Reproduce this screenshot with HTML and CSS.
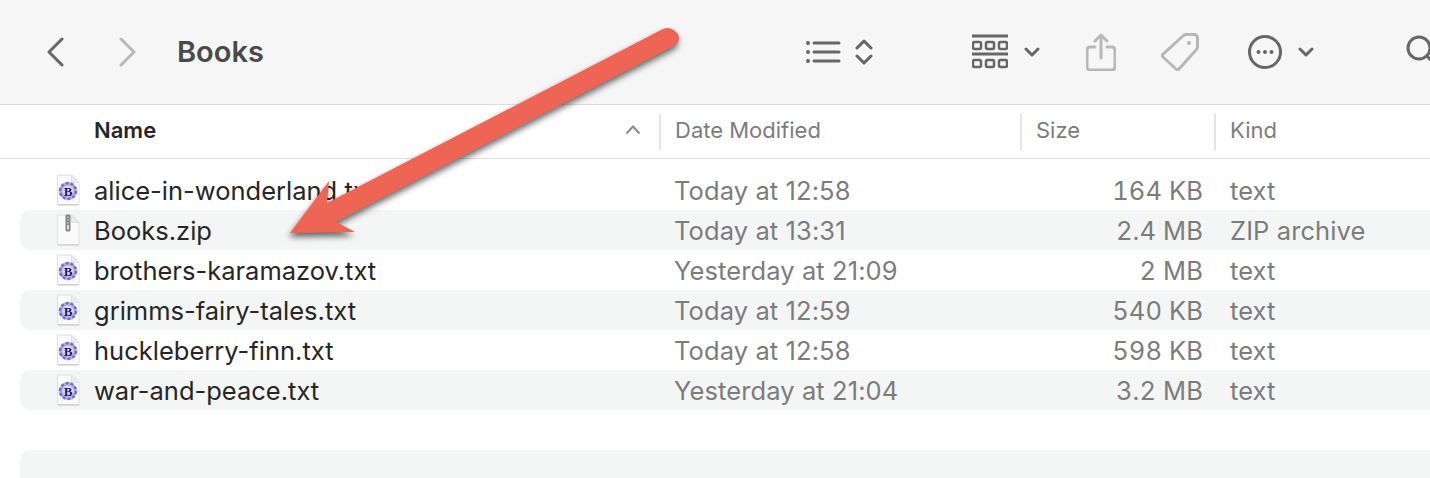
FILE: index.html
```html
<!DOCTYPE html>
<html lang="en">
<head>
  <meta charset="UTF-8">
  <meta name="viewport" content="width=device-width, initial-scale=1.0">
  <title>Books</title>
  <link rel="stylesheet" href="styles.css">
</head>
<body>
  <svg class="sprite" aria-hidden="true">
    <symbol id="doc-icon" viewBox="0 0 24 32">
      <path d="M1.500 1h14l7.500 7.500V30.500H1.500z" fill="#fbfbfb" stroke="#dedede"/>
      <path d="M2 31h21" stroke="#c4c4c4"/>
      <path d="M15.500 1v7.500H23z" fill="#ececec" stroke="#dedede"/>
      <circle cx="12" cy="17" r="9" fill="#aeacdf"/>
      <circle cx="12" cy="17" r="8" fill="none" stroke="#7472c0" stroke-width="2.500" stroke-dasharray="3 2"/>
      <circle cx="12" cy="17" r="5.500" fill="#dcdcf4"/>
      <text class="doc-letter" x="12" y="21.500" text-anchor="middle">B</text>
    </symbol>
    <symbol id="zip-icon" viewBox="0 0 24 32">
      <path d="M1.500 1h14l7.500 7.500V30.500H1.500z" fill="#fafafa" stroke="#e0e0e0"/>
      <path d="M2 31h21" stroke="#c8c8c8"/>
      <path d="M15.500 1v7.500H23z" fill="#ececec" stroke="#e0e0e0"/>
      <rect x="9.500" y="0.500" width="5" height="17" rx="1.500" fill="#858585"/>
      <path d="M11 3h2M11 6h2M11 9h2" stroke="#cfcfcf"/>
      <rect x="11" y="11" width="2" height="4.500" fill="#dcdcdc"/>
    </symbol>
  </svg>

  <div class="window">
    <div class="toolbar">
      <svg class="tool nav-back" width="18" height="30" viewBox="0 0 18 30"><path d="M16 2 3 15l13 13"/></svg>
      <svg class="tool tool-faint nav-forward" width="18" height="30" viewBox="0 0 18 30"><path d="m2 2 13 13L2 28"/></svg>
      <h1 class="folder-name">Books</h1>

      <svg class="tool view-list" width="36" height="26" viewBox="0 0 36 26">
        <path d="M9 4h25M9 13h25M9 22h25"/>
        <circle class="tool-fill" cx="3" cy="4" r="2"/>
        <circle class="tool-fill" cx="3" cy="13" r="2"/>
        <circle class="tool-fill" cx="3" cy="22" r="2"/>
      </svg>
      <svg class="tool view-updown" width="18" height="28" viewBox="0 0 18 28"><path d="m2 10 7-7 7 7M2 18l7 7 7-7"/></svg>

      <svg class="tool view-grid" width="36" height="36" viewBox="0 0 36 36">
        <path d="M0 2h36M0 20h36"/>
        <g class="tool-thin">
          <rect x="1" y="8" width="8" height="7" rx="1.500"/>
          <rect x="14" y="8" width="8" height="7" rx="1.500"/>
          <rect x="27" y="8" width="8" height="7" rx="1.500"/>
          <rect x="1" y="26" width="8" height="7" rx="1.500"/>
          <rect x="14" y="26" width="8" height="7" rx="1.500"/>
          <rect x="27" y="26" width="8" height="7" rx="1.500"/>
        </g>
      </svg>
      <svg class="tool caret-grid" width="16" height="12" viewBox="0 0 16 12"><path d="m2 3 6 6 6-6"/></svg>

      <svg class="tool tool-faint share" width="30" height="38" viewBox="0 0 30 38">
        <path d="M9 14H4a3 3 0 0 0-3 3v17a3 3 0 0 0 3 3h22a3 3 0 0 0 3-3V17a3 3 0 0 0-3-3h-5"/>
        <path d="M15 25V2M9 8l6-6 6 6"/>
      </svg>
      <svg class="tool tool-faint tag" width="38" height="38" viewBox="0 0 38 38">
        <path d="M25 1.500h8a3.500 3.500 0 0 1 3.500 3.500v9a4 4 0 0 1-1 2.500L18 36a2 2 0 0 1-3 0L2 24a2 2 0 0 1 0-3L22 3a4 4 0 0 1 3-1.500z"/>
        <circle class="tool-faint-fill" cx="28" cy="10" r="2"/>
      </svg>

      <svg class="tool more" width="34" height="34" viewBox="0 0 34 34">
        <circle cx="17" cy="17" r="15.500"/>
        <circle class="tool-fill" cx="10.500" cy="17" r="2"/>
        <circle class="tool-fill" cx="17" cy="17" r="2"/>
        <circle class="tool-fill" cx="23.500" cy="17" r="2"/>
      </svg>
      <svg class="tool caret-more" width="16" height="12" viewBox="0 0 16 12"><path d="m2 3 6 6 6-6"/></svg>

      <svg class="tool search" width="32" height="34" viewBox="0 0 32 34">
        <circle cx="13" cy="13" r="11"/>
        <path d="m21 21 9 10"/>
      </svg>
    </div>

    <div class="columns">
      <div class="column column-name">
        <span>Name</span>
        <svg class="sort-caret" width="16" height="11" viewBox="0 0 16 11"><path d="m1.500 9.500 6.500-7 6.500 7"/></svg>
      </div>
      <div class="column">Date Modified</div>
      <div class="column">Size</div>
      <div class="column">Kind</div>
    </div>

    <div class="file-list">
      <div class="file-row">
        <div class="file-name"><svg class="file-icon"><use href="#doc-icon"/></svg>alice-in-wonderland.txt</div>
        <div class="file-meta">Today at 12:58</div>
        <div class="file-meta file-size">164 KB</div>
        <div class="file-meta">text</div>
      </div>
      <div class="file-row">
        <div class="file-name"><svg class="file-icon"><use href="#zip-icon"/></svg>Books.zip</div>
        <div class="file-meta">Today at 13:31</div>
        <div class="file-meta file-size">2.4 MB</div>
        <div class="file-meta">ZIP archive</div>
      </div>
      <div class="file-row">
        <div class="file-name"><svg class="file-icon"><use href="#doc-icon"/></svg>brothers-karamazov.txt</div>
        <div class="file-meta">Yesterday at 21:09</div>
        <div class="file-meta file-size">2 MB</div>
        <div class="file-meta">text</div>
      </div>
      <div class="file-row">
        <div class="file-name"><svg class="file-icon"><use href="#doc-icon"/></svg>grimms-fairy-tales.txt</div>
        <div class="file-meta">Today at 12:59</div>
        <div class="file-meta file-size">540 KB</div>
        <div class="file-meta">text</div>
      </div>
      <div class="file-row">
        <div class="file-name"><svg class="file-icon"><use href="#doc-icon"/></svg>huckleberry-finn.txt</div>
        <div class="file-meta">Today at 12:58</div>
        <div class="file-meta file-size">598 KB</div>
        <div class="file-meta">text</div>
      </div>
      <div class="file-row">
        <div class="file-name"><svg class="file-icon"><use href="#doc-icon"/></svg>war-and-peace.txt</div>
        <div class="file-meta">Yesterday at 21:04</div>
        <div class="file-meta file-size">3.2 MB</div>
        <div class="file-meta">text</div>
      </div>
      <div class="file-row"></div>
      <div class="file-row"></div>
    </div>

    <svg class="arrow" width="720" height="300" viewBox="0 0 720 300">
      <path d="M290 233 329 181 327 203 663 29Q668 27 672 29 679 33 679 38 679 43 674 46L336 222 355 232Z"/>
    </svg>
  </div>
</body>
</html>
```

FILE: styles.css
```css
html, body {
  margin: 0;
  padding: 0;
  background-color: white;
}

body {
  font-family: Inter, "Liberation Sans", sans-serif;
  overflow: hidden;
}

.sprite {
  display: none;
}

.doc-letter {
  font-family: "Liberation Serif", serif;
  font-size: 13px;
  font-weight: bold;
  fill: #1c1a6e;
}

.window {
  position: relative;
  width: 1430px;
  height: 478px;
  overflow: hidden;
}

/* toolbar */
.toolbar {
  height: 104px;
  display: flex;
  align-items: center;
  padding-left: 46px;
  background-color: #f6f6f6;
  border-bottom: 1px solid #dcdcdc;
}

.folder-name {
  flex: none;
  margin: 0 0 2px 40px;
  width: 628px;
  font-size: 29px;
  font-weight: 600;
  color: #4a4a4a;
}

.tool {
  flex: none;
  fill: none;
  stroke: #666666;
  stroke-width: 3;
  stroke-linecap: round;
  stroke-linejoin: round;
}

.tool-thin {
  stroke-width: 2.500;
}

.tool-fill {
  fill: #666666;
  stroke: none;
}

.tool-faint {
  stroke: #b8b8b8;
}

.tool-faint-fill {
  fill: #b8b8b8;
  stroke: none;
}

.nav-forward { margin-left: 55px; }
.view-updown { margin-left: 14px; }
.view-grid { margin-left: 99px; }
.caret-grid { margin-left: 16px; }
.share { margin-left: 46px; }
.tag { margin-left: 45px; }
.more { margin-left: 49px; }
.caret-more { margin-left: 16px; }
.search { margin-left: 92px; }

/* column headers */
.columns {
  height: 53px;
  display: grid;
  grid-template-columns: 659px 361px 194px 1fr;
  align-items: center;
  border-bottom: 1px solid #dfdfdf;
  font-size: 22px;
  color: #7c7c7c;
}

.column {
  box-sizing: border-box;
  height: 36px;
  display: flex;
  align-items: center;
  padding: 0 0 4px 14px;
  border-left: 2px solid #e4e4e4;
}

.column-name {
  justify-content: space-between;
  padding: 0 18px 4px 94px;
  border-left: none;
  font-weight: 600;
  color: #262626;
}

.sort-caret {
  fill: none;
  stroke: #8a8a8a;
  stroke-width: 2;
}

/* file rows */
.file-list {
  padding-top: 11px;
}

.file-row {
  height: 40px;
  display: grid;
  grid-template-columns: 640px 361px 182px 1fr;
  align-items: center;
  margin-left: 20px;
  font-size: 25.500px;
}

.file-row:nth-child(even) {
  background-color: #f4f5f5;
  border-radius: 10px 0 0 10px;
}

.file-name {
  display: flex;
  align-items: center;
  color: #262626;
}

.file-icon {
  width: 24px;
  height: 32px;
  margin: 0 14px 0 36px;
}

.file-meta {
  padding-left: 14px;
  color: #7c7c7c;
  letter-spacing: 0.100px;
}

.file-size {
  padding: 0;
  text-align: right;
  font-variant-numeric: tabular-nums;
}

.file-size + .file-meta {
  padding-left: 27px;
}

/* annotation on top of the window */
.arrow {
  position: absolute;
  left: 0;
  top: 0;
  fill: #ee6555;
  filter: drop-shadow(-1px 4px 3px rgba(0, 0, 0, 0.6));
}
```
